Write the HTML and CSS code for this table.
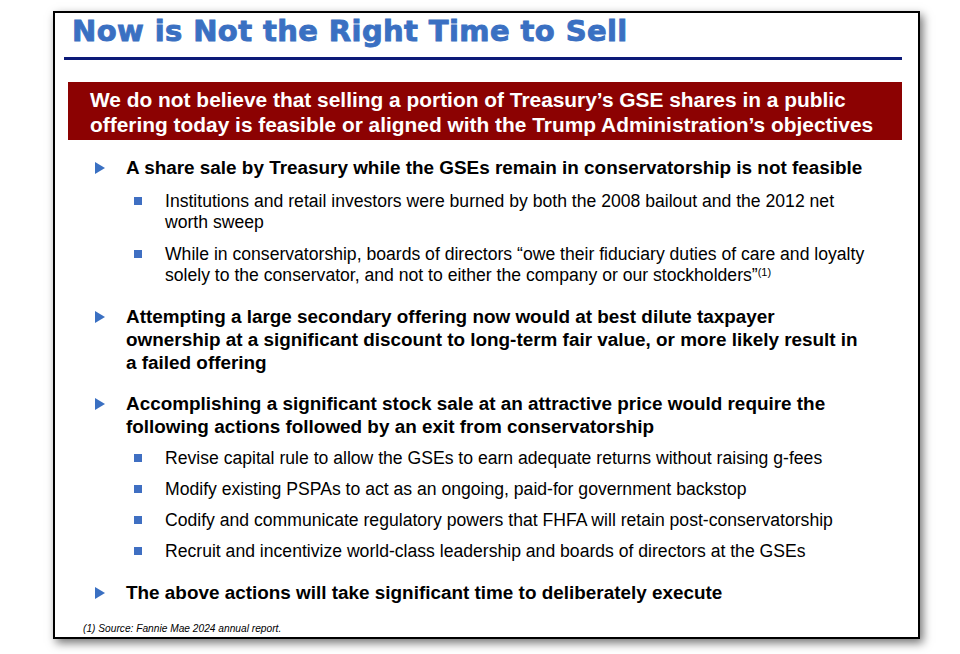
FILE: index.html
```html
<!DOCTYPE html>
<html>
<head>
<meta charset="utf-8">
<link rel="stylesheet" href="styles.css">
</head>
<body>
<div class="slide">
  <div class="header">
    <h1 class="title">Now is Not the Right Time to Sell</h1>
  </div>
  <div class="banner">We do not believe that selling a portion of Treasury’s GSE shares in a public offering today is feasible or aligned with the Trump Administration’s objectives</div>
  <ul class="l1">
    <li class="i1">
      <div class="t1">A share sale by Treasury while the GSEs remain in conservatorship is not feasible</div>
      <ul class="l2">
        <li class="i2">Institutions and retail investors were burned by both the 2008 bailout and the 2012 net worth sweep</li>
        <li class="i2">While in conservatorship, boards of directors “owe their fiduciary duties of care and loyalty solely to the conservator, and not to either the company or our stockholders”<sup>(1)</sup></li>
      </ul>
    </li>
    <li class="i1 gap">
      <div class="t1">Attempting a large secondary offering now would at best dilute taxpayer ownership at a significant discount to long-term fair value, or more likely result in a failed offering</div>
    </li>
    <li class="i1 gap">
      <div class="t1">Accomplishing a significant stock sale at an attractive price would require the following actions followed by an exit from conservatorship</div>
      <ul class="l2 tight">
        <li class="i2">Revise capital rule to allow the GSEs to earn adequate returns without raising g-fees</li>
        <li class="i2">Modify existing PSPAs to act as an ongoing, paid-for government backstop</li>
        <li class="i2">Codify and communicate regulatory powers that FHFA will retain post-conservatorship</li>
        <li class="i2">Recruit and incentivize world-class leadership and boards of directors at the GSEs</li>
      </ul>
    </li>
    <li class="i1 gap">
      <div class="t1">The above actions will take significant time to deliberately execute</div>
    </li>
  </ul>
  <div class="foot">(1) Source: Fannie Mae 2024 annual report.</div>
</div>
</body>
</html>
```

FILE: styles.css
```css
html, body {
  margin: 0;
  padding: 0;
  background: #ffffff;
}
body {
  width: 960px;
  height: 654px;
  overflow: hidden;
  font-family: "Liberation Sans", Arial, sans-serif;
  color: #000;
}
.slide {
  box-sizing: border-box;
  margin: 11px 0 0 53px;
  width: 867px;
  height: 628px;
  border: 2px solid #000;
  background: #fff;
  box-shadow: 3px 4px 9px rgba(0, 0, 0, 0.55);
  padding: 0 16px 0 9px;
  display: flex;
  flex-direction: column;
}
.header {
  border-bottom: 3px solid #0c1a78;
  padding: 1px 0 9px 8px;
}
.title {
  margin: 0;
  font-family: "DejaVu Sans", "Liberation Sans", sans-serif;
  font-size: 29px;
  line-height: 34px;
  font-weight: bold;
  letter-spacing: 0.4px;
  color: #3a70c2;
  -webkit-text-stroke: 0.9px #3a70c2;
}
.banner {
  margin: 22px 0 0 4px;
  background: #8c0202;
  color: #fff;
  font-weight: bold;
  font-size: 20.9px;
  line-height: 25px;
  padding: 5px 10px 3px 22px;
}
.l1 {
  list-style: none;
  margin: 16px 34px 0 0;
  padding: 0;
}
.i1 {
  position: relative;
  padding-left: 62px;
}
.i1::before {
  content: "";
  position: absolute;
  left: 31px;
  top: 6px;
  width: 0;
  height: 0;
  border-top: 6px solid transparent;
  border-bottom: 6px solid transparent;
  border-left: 10px solid #3a70c2;
}
.gap {
  margin-top: 18.5px;
}
.t1 {
  font-weight: bold;
  font-size: 18.9px;
  line-height: 23px;
}
.l2 {
  list-style: none;
  margin: 0;
  padding: 0;
}
.i2 {
  position: relative;
  margin-top: 11.5px;
  padding-left: 39px;
  font-size: 17.6px;
  line-height: 21px;
}
.tight .i2 {
  margin-top: 10px;
}
.i2::before {
  content: "";
  position: absolute;
  left: 8px;
  top: 6px;
  width: 8px;
  height: 8px;
  background: #3f6fc2;
}
sup {
  font-size: 11px;
  line-height: 0;
  vertical-align: 5px;
}
.foot {
  margin-top: auto;
  margin-bottom: 2px;
  padding-left: 19px;
  font-size: 10.2px;
  font-style: italic;
  line-height: 12px;
}
```
